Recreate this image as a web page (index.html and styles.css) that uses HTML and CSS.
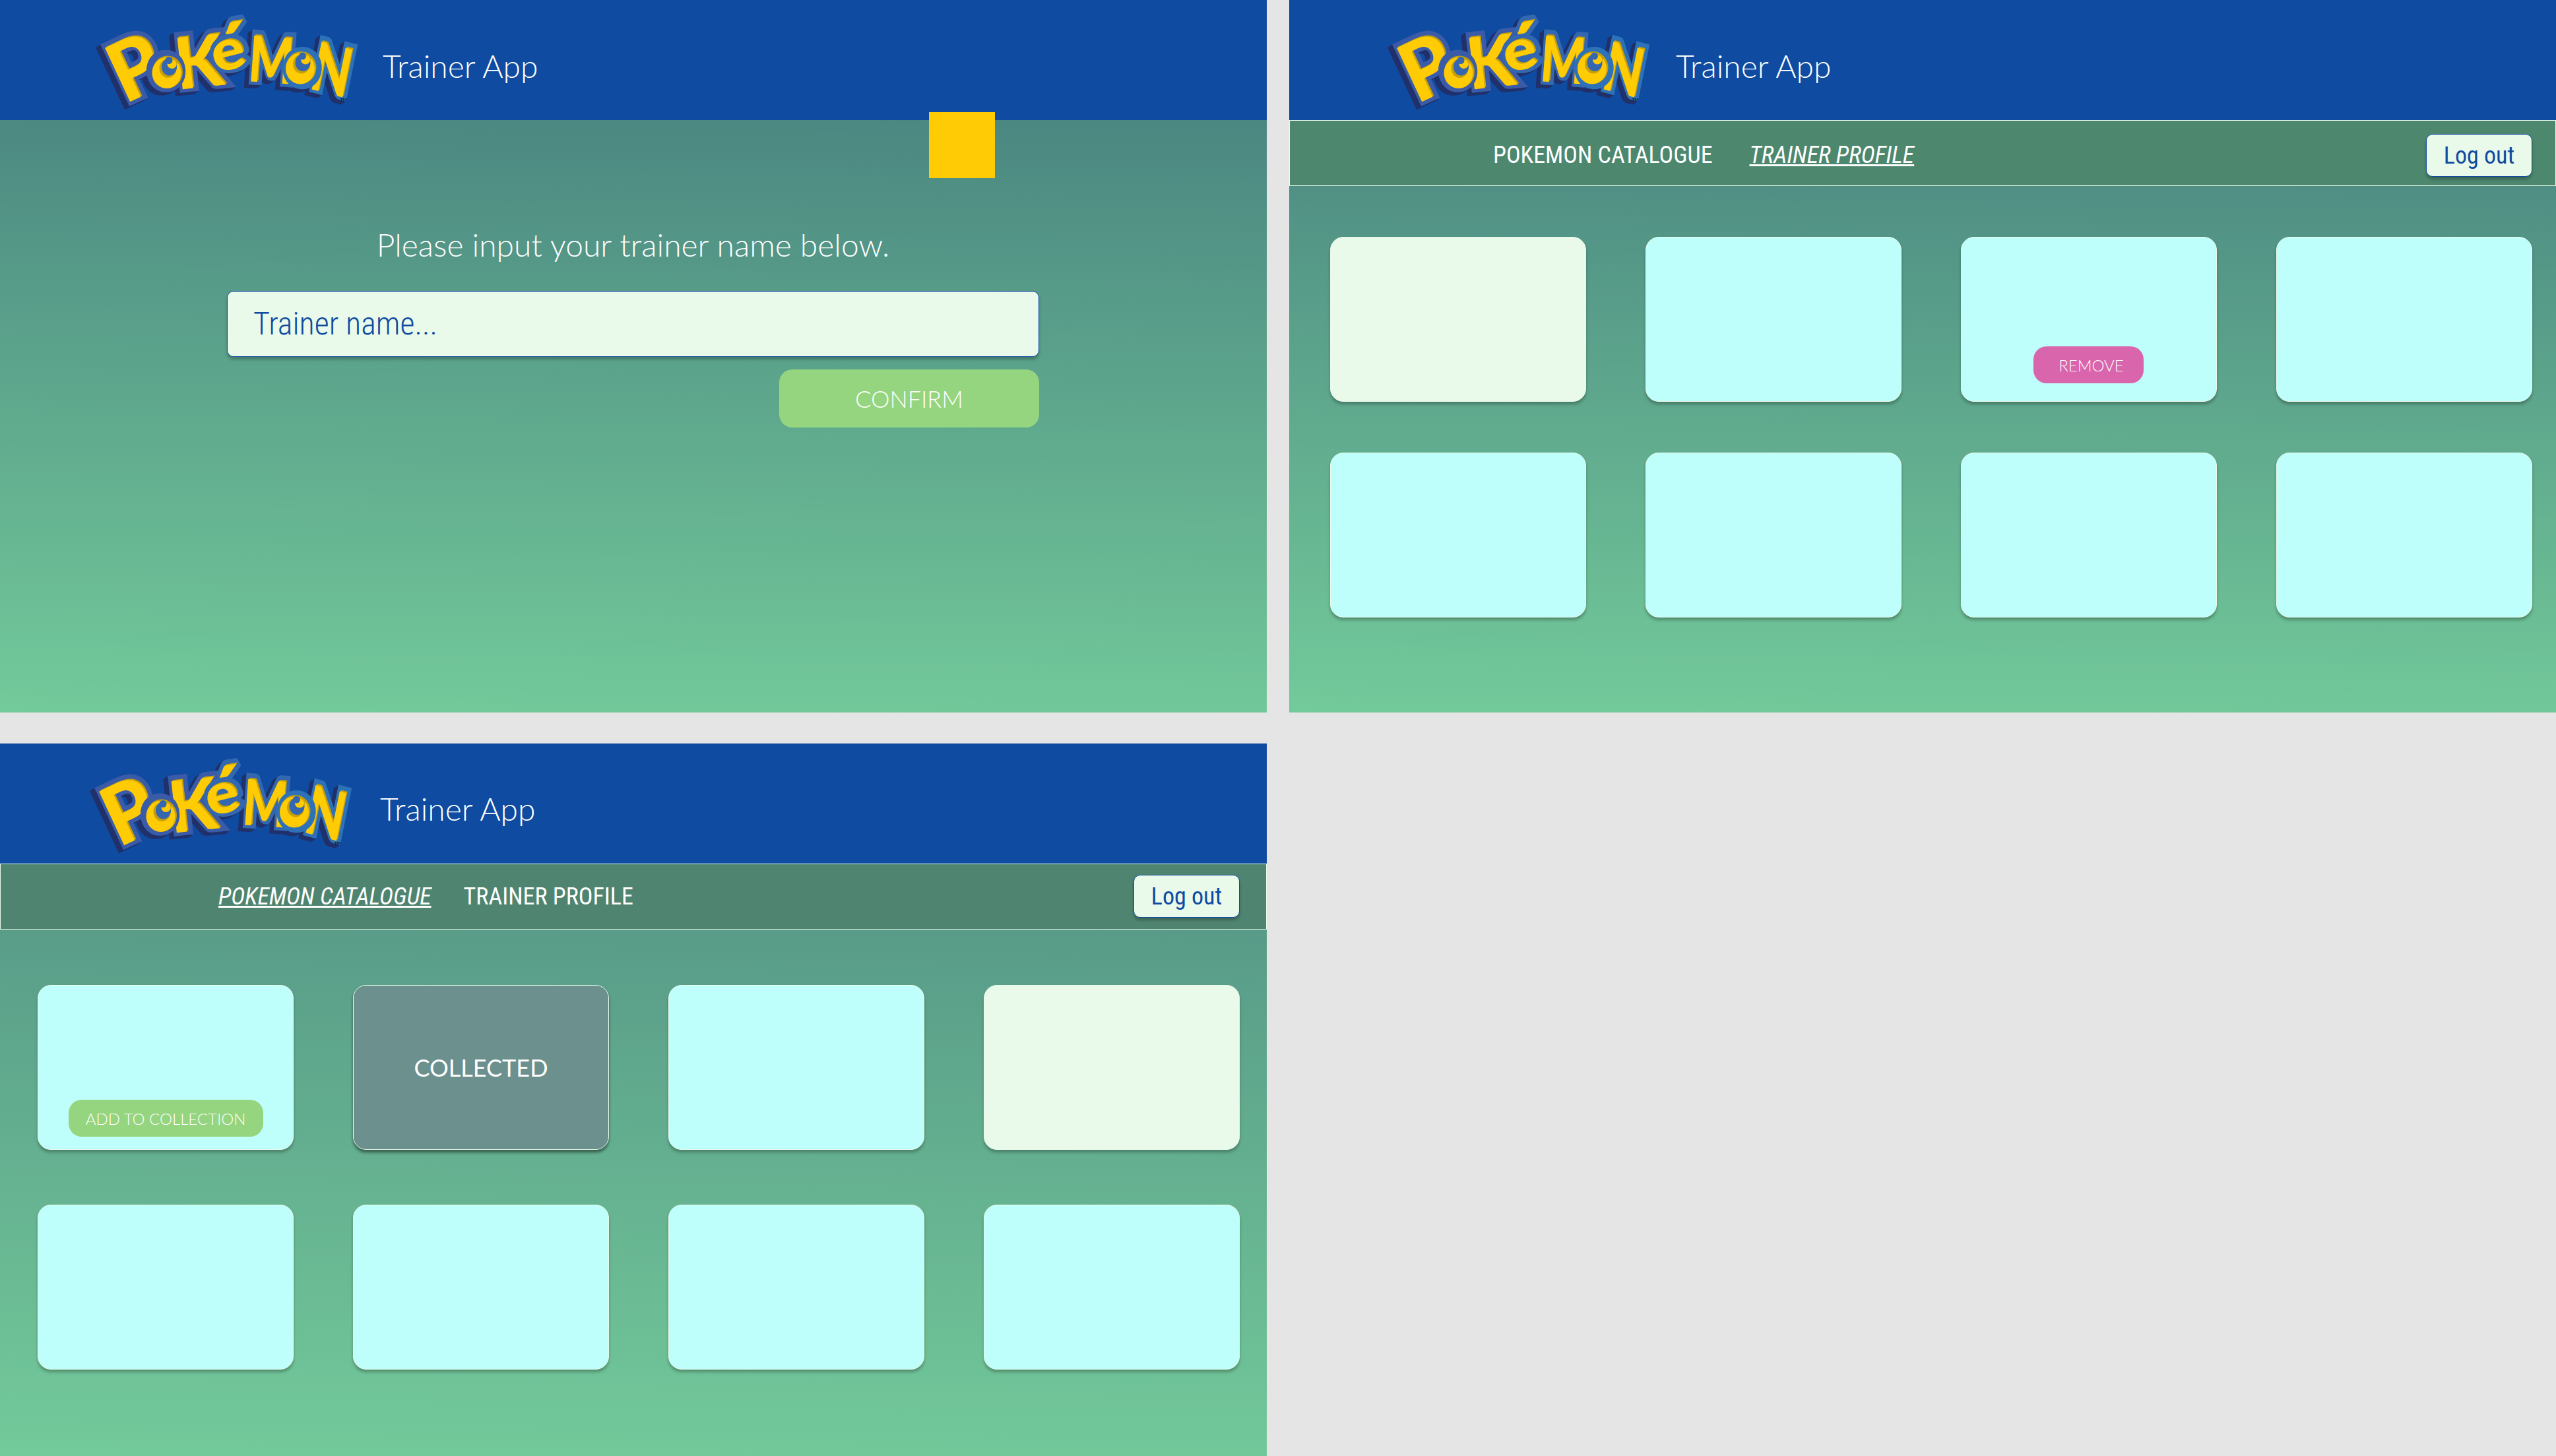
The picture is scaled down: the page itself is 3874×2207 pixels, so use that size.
FILE: index.html
```html
<!DOCTYPE html>
<html lang="en">
<head>
<meta charset="utf-8">
<title>Trainer App</title>
<link rel="stylesheet" href="styles.css">
</head>
<body>
<svg class="defs" aria-hidden="true">
  <defs>
    <g id="tall" class="letters">
      <text class="left" transform="translate(61 156) rotate(-25) scale(.96 1)" font-size="124">P</text>
      <text class="left" transform="translate(141 134) rotate(-6) scale(.97 1)" font-size="108">K</text>
      <text class="mid" transform="translate(247 121) rotate(4) scale(.74 1)" font-size="96">M</text>
      <text class="right" transform="matrix(.73 .19 -.2 .98 339 132)" font-size="102">N</text>
    </g>
    <g id="accented" class="letters">
      <text class="mid" transform="translate(199 109) rotate(-14) scale(1.1 1)" font-size="86">e</text>
      <text class="mid accent" transform="translate(209 119) rotate(-8) scale(.95 1)" font-size="116">´</text>
    </g>
    <g id="round" class="letters">
      <text class="left" transform="translate(98 134) rotate(-4) scale(.92 1)" font-size="68">O</text>
      <text class="right" transform="translate(301 126) rotate(4) scale(.92 1)" font-size="68">O</text>
    </g>
    <g id="side"><use href="#tall"/><use href="#accented"/><use href="#round"/></g>
    <g id="iris">
      <ellipse class="shade" cx=".5" cy="-.5" rx="23" ry="24.500"/>
      <ellipse class="glow" cx="-1" cy="1" rx="22" ry="23.500"/>
      <ellipse class="shade" cx="1" cy="-6" rx="13" ry="14.500"/>
      <ellipse class="pupil" cx="3" cy="-8" rx="11.500" ry="13"/>
      <circle class="shade" cx="7.500" cy="-14" r="7.500"/>
      <circle class="glow" cx="7" cy="-12.500" r="7"/>
      <circle class="pupil" cx="2.500" cy="-18" r="5.500"/>
    </g>
    <symbol id="logo" viewBox="0 0 420 190">
      <g class="logo-side">
        <use href="#side" x="-7" y="5"/>
        <use href="#side" x="-6" y="4.300"/>
        <use href="#side" x="-5" y="3.600"/>
        <use href="#side" x="-4" y="2.900"/>
        <use href="#side" x="-3" y="2.200"/>
        <use href="#side" x="-2" y="1.500"/>
        <use href="#side" x="-1" y=".7"/>
      </g>
      <use class="logo-edge" href="#tall"/>
      <use class="logo-gold" href="#tall"/>
      <use class="logo-face" href="#tall" x="-2" y="2"/>
      <use class="logo-edge" href="#accented"/>
      <use class="logo-gold" href="#accented"/>
      <use class="logo-face" href="#accented" x="-2" y="2"/>
      <use class="logo-edge" href="#round"/>
      <use href="#iris" x="123.500" y="109.500"/>
      <use href="#iris" x="326" y="103"/>
      <text class="tm" x="386" y="153">TM</text>
    </symbol>
  </defs>
</svg>
<div class="board">
  <section class="frame login">
    <header class="header">
      <svg class="logo" role="img" aria-label="Pokémon"><use href="#logo"/></svg>
      <h1 class="title">Trainer App</h1>
    </header>
    <div class="swatch"></div>
    <form class="form">
      <label class="prompt">Please input your trainer name below.</label>
      <div class="field"><span class="cond light">Trainer name...</span></div>
      <div class="button confirm">CONFIRM</div>
    </form>
  </section>

  <section class="frame profile">
    <header class="header">
      <svg class="logo" role="img" aria-label="Pokémon"><use href="#logo"/></svg>
      <h1 class="title">Trainer App</h1>
    </header>
    <nav class="nav">
      <a class="link cond">POKEMON CATALOGUE</a>
      <a class="link cond active">TRAINER PROFILE</a>
      <div class="logout"><span class="cond">Log out</span></div>
    </nav>
    <div class="cards">
      <div class="card pale"></div>
      <div class="card"></div>
      <div class="card"><div class="button remove">REMOVE</div></div>
      <div class="card"></div>
      <div class="card"></div>
      <div class="card"></div>
      <div class="card"></div>
      <div class="card"></div>
    </div>
  </section>

  <section class="frame catalogue">
    <header class="header">
      <svg class="logo" role="img" aria-label="Pokémon"><use href="#logo"/></svg>
      <h1 class="title">Trainer App</h1>
    </header>
    <nav class="nav">
      <a class="link cond active">POKEMON CATALOGUE</a>
      <a class="link cond">TRAINER PROFILE</a>
      <div class="logout"><span class="cond">Log out</span></div>
    </nav>
    <div class="cards">
      <div class="card"><div class="button add">ADD TO COLLECTION</div></div>
      <div class="card collected">COLLECTED</div>
      <div class="card"></div>
      <div class="card pale"></div>
      <div class="card"></div>
      <div class="card"></div>
      <div class="card"></div>
      <div class="card"></div>
    </div>
  </section>
</div>
</body>
</html>
```
FILE: styles.css
```css
* { box-sizing: border-box; }

body {
  margin: 0;
  background: #e5e5e5;
  font-family: Lato, sans-serif;
  color: #fff;
}

.defs { position: absolute; width: 0; height: 0; }

.board {
  display: grid;
  grid-template-columns: 1920px 1920px;
  grid-auto-rows: 1080px;
  gap: 47px 34px;
  width: 3874px;
}

.frame {
  position: relative;
  display: flex;
  flex-direction: column;
  background: linear-gradient(181deg, #437a7c 0%, #73ca9a 100%);
}
.catalogue { background: linear-gradient(181deg, #4f8b82 0%, #73ca9a 100%); }

/* header */
.header {
  display: flex;
  height: 182px;
  padding-left: 130px;
  background: #0f4ba0;
}
.profile .header { padding-left: 134px; }
.catalogue .header { padding-left: 121px; }
.logo { flex: none; width: 420px; height: 190px; }
.title {
  margin: 71px 0 0 30px;
  font-size: 48px;
  font-weight: 300;
  line-height: 58px;
}
.profile .title { margin-left: 32px; }
.catalogue .title { margin: 70px 0 0 35px; }

/* logo lettering */
.letters text { font-family: Lato, sans-serif; font-weight: 900; stroke-linejoin: miter; stroke-miterlimit: 3; }
.letters .accent { stroke-miterlimit: 1.6; }
.logo-side { fill: #20316b; stroke: #20316b; stroke-width: 14px; }
.logo-edge { stroke-width: 14px; --left: #3a5ba8; --mid: #3367b0; --right: #2d72b8; }
.letters .left { stroke: var(--left, inherit); }
.letters .mid { stroke: var(--mid, inherit); }
.letters .right { stroke: var(--right, inherit); }
.logo-gold, .shade { fill: #c79f07; }
.logo-face, .glow { fill: #ffcb05; }
.pupil { fill: #3567b0; }
.tm { font: 700 6px Lato, sans-serif; fill: #111; }

/* login */
.swatch {
  position: absolute;
  left: 1408px;
  top: 170px;
  width: 100px;
  height: 100px;
  background: #ffcb05;
}
.form {
  display: flex;
  flex-direction: column;
  width: 1231px;
  margin: 160px 0 0 344px;
}
.prompt {
  font-size: 48px;
  font-weight: 300;
  line-height: 58px;
  text-align: center;
}
.field {
  display: flex;
  align-items: center;
  height: 100px;
  margin-top: 41px;
  padding: 0 0 2px 39px;
  border: 1px solid #0f4ba0;
  border-radius: 10px;
  background: #e9faeb;
  box-shadow: 0 4px 4px rgba(0, 0, 0, .25);
  color: #0f4ba0;
  font-size: 48px;
}
.cond { font-family: "Roboto Condensed", Roboto, sans-serif; font-stretch: 75%; }
.light { font-weight: 300; }

.button {
  display: flex;
  align-items: center;
  justify-content: center;
  border-radius: 20px;
  background: #96d57f;
  font-weight: 300;
}
.confirm {
  align-self: flex-end;
  width: 394px;
  height: 88px;
  margin-top: 19px;
  font-size: 36px;
}

/* navigation */
.nav {
  display: flex;
  height: 100px;
  padding: 20px 35px 0 308px;
  border: 1px solid #e9faeb;
  background: #4d886e;
  font-size: 36px;
}
.link { margin: 11px 56px 0 0; line-height: 42px; white-space: nowrap; }
.active { font-style: italic; text-decoration: underline; }
.catalogue .nav { padding: 16px 40px 0 330px; background: #4f8570; }
.catalogue .link { margin: 12px 49px 0 0; }
.logout {
  display: flex;
  align-items: center;
  justify-content: center;
  width: 161px;
  height: 65px;
  margin-left: auto;
  border: 1px solid #0f4ba0;
  border-radius: 10px;
  background: #e9faeb;
  box-shadow: 0 4px 4px rgba(0, 0, 0, .25);
  color: #0f4ba0;
}

/* cards */
.cards {
  display: grid;
  grid-template-columns: repeat(4, 388px);
  grid-auto-rows: 250px;
  gap: 77px 90px;
  margin: 77px 0 0 62px;
}
.catalogue .cards { margin: 84px 0 0 57px; row-gap: 83px; }
.card {
  display: flex;
  align-items: flex-end;
  justify-content: center;
  border: 1px solid #e9faeb;
  border-radius: 20px;
  background: #bffffb;
  box-shadow: 0 4px 4px rgba(0, 0, 0, .25);
}
.pale { background: #e9faeb; }
.collected {
  align-items: center;
  background: #6c908d;
  box-shadow: 0 4px 4px rgba(0, 0, 0, .45);
  font-size: 36px;
}
.remove, .add { height: 56px; font-size: 24px; }
.remove { width: 167px; margin: 0 1px 27px 0; padding-left: 8px; background: #d966ac; }
.add { width: 295px; margin-bottom: 19px; }
```
